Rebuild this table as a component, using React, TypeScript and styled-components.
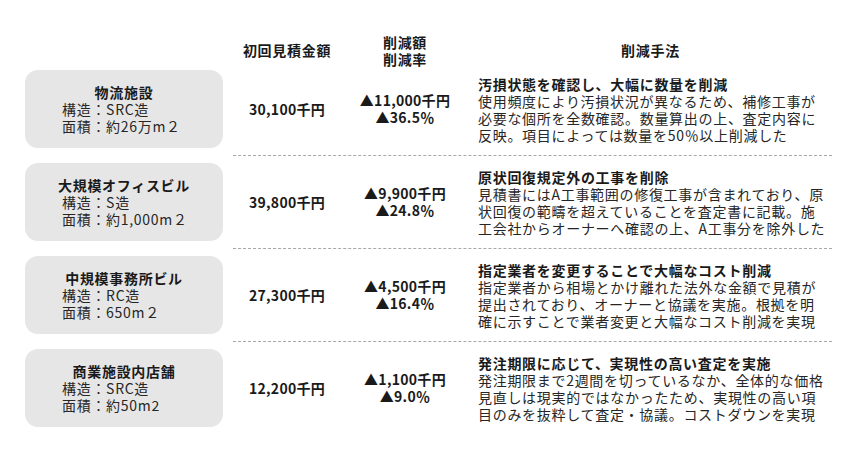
import React from "react";
import styled, { createGlobalStyle } from "styled-components";

const GlobalStyle = createGlobalStyle`
	html, body {
		margin: 0;
		padding: 0;
		background: #ffffff;
	}
	body {
		font-family: "Noto Sans CJK JP", "Noto Sans", sans-serif;
		color: #1e1e1e;
	}
`;

const Page = styled.div`
	width: 807px;
	padding: 38px 0 0 25px;
`;

const HeaderRow = styled.div`
	display: flex;
	height: 25px;
	align-items: center;
	padding-left: 208px;
`;

const HeadCell = styled.div<{ $width?: number }>`
	width: ${(p) => (p.$width ? `${p.$width}px` : "auto")};
	flex: ${(p) => (p.$width ? "none" : "1")};
	text-align: center;
	font-size: 14px;
	font-weight: 700;
	line-height: 17px;
	letter-spacing: 0.05em;
	color: #1a1a1a;
`;

const Row = styled.div`
	display: flex;
	height: 93px;
`;

const Card = styled.div`
	width: 198px;
	height: 78px;
	margin: 7px 10px 8px 0;
	background: #e7e6e6;
	border-radius: 13px;
	display: flex;
	flex-direction: column;
	justify-content: center;
	font-size: 14px;
	line-height: 17px;
	letter-spacing: 0.05em;
`;

const CardTitle = styled.div`
	text-align: center;
	font-weight: 700;
	color: #1a1a1a;
`;

const CardDetail = styled.div`
	padding-left: 37px;
	color: #262626;
	white-space: nowrap;
`;

const Cells = styled.div<{ $last?: boolean }>`
	flex: 1;
	display: flex;
	align-items: center;
	border-bottom: ${(p) => (p.$last ? "1px solid transparent" : "1px dashed #a8a8a8")};
`;

const Amount = styled.div`
	width: 108px;
	text-align: center;
	font-size: 14px;
	font-weight: 700;
	letter-spacing: 0.02em;
	color: #1a1a1a;
`;

const Reduction = styled.div`
	width: 128px;
	text-align: center;
	font-size: 14px;
	font-weight: 700;
	line-height: 17px;
	letter-spacing: 0.02em;
	color: #1a1a1a;
`;

const Method = styled.div`
	flex: 1;
	padding-left: 9px;
	font-size: 14px;
	letter-spacing: 0.05em;
	white-space: nowrap;
`;

const MethodTitle = styled.div`
	font-weight: 700;
	line-height: 18px;
	color: #1a1a1a;
`;

const MethodBody = styled.div`
	line-height: 17px;
	color: #262626;
`;

type Item = {
	name: string;
	structure: string;
	area: string;
	amount: string;
	cut: string;
	rate: string;
	title: string;
	body: string[];
};

const items: Item[] = [
	{
		name: "物流施設",
		structure: "構造：SRC造",
		area: "面積：約26万m２",
		amount: "30,100千円",
		cut: "▲11,000千円",
		rate: "▲36.5％",
		title: "汚損状態を確認し、大幅に数量を削減",
		body: [
			"使用頻度により汚損状況が異なるため、補修工事が",
			"必要な個所を全数確認。数量算出の上、査定内容に",
			"反映。項目によっては数量を50％以上削減した",
		],
	},
	{
		name: "大規模オフィスビル",
		structure: "構造：S造",
		area: "面積：約1,000m２",
		amount: "39,800千円",
		cut: "▲9,900千円",
		rate: "▲24.8％",
		title: "原状回復規定外の工事を削除",
		body: [
			"見積書にはA工事範囲の修復工事が含まれており、原",
			"状回復の範疇を超えていることを査定書に記載。施",
			"工会社からオーナーへ確認の上、A工事分を除外した",
		],
	},
	{
		name: "中規模事務所ビル",
		structure: "構造：RC造",
		area: "面積：650m２",
		amount: "27,300千円",
		cut: "▲4,500千円",
		rate: "▲16.4％",
		title: "指定業者を変更することで大幅なコスト削減",
		body: [
			"指定業者から相場とかけ離れた法外な金額で見積が",
			"提出されており、オーナーと協議を実施。根拠を明",
			"確に示すことで業者変更と大幅なコスト削減を実現",
		],
	},
	{
		name: "商業施設内店舗",
		structure: "構造：SRC造",
		area: "面積：約50m2",
		amount: "12,200千円",
		cut: "▲1,100千円",
		rate: "▲9.0％",
		title: "発注期限に応じて、実現性の高い査定を実施",
		body: [
			"発注期限まで2週間を切っているなか、全体的な価格",
			"見直しは現実的ではなかったため、実現性の高い項",
			"目のみを抜粋して査定・協議。コストダウンを実現",
		],
	},
];

const App = () => {
	return (
		<>
			<GlobalStyle />
			<Page>
				<HeaderRow>
					<HeadCell $width={108}>初回見積金額</HeadCell>
					<HeadCell $width={128}>
						削減額
						<br />
						削減率
					</HeadCell>
					<HeadCell>削減手法</HeadCell>
				</HeaderRow>
				{items.map((item, i) => (
					<Row key={item.name}>
						<Card>
							<CardTitle>{item.name}</CardTitle>
							<CardDetail>{item.structure}</CardDetail>
							<CardDetail>{item.area}</CardDetail>
						</Card>
						<Cells $last={i === items.length - 1}>
							<Amount>{item.amount}</Amount>
							<Reduction>
								{item.cut}
								<br />
								{item.rate}
							</Reduction>
							<Method>
								<MethodTitle>{item.title}</MethodTitle>
								{item.body.map((line) => (
									<MethodBody key={line}>{line}</MethodBody>
								))}
							</Method>
						</Cells>
					</Row>
				))}
			</Page>
		</>
	);
};

export default App;
